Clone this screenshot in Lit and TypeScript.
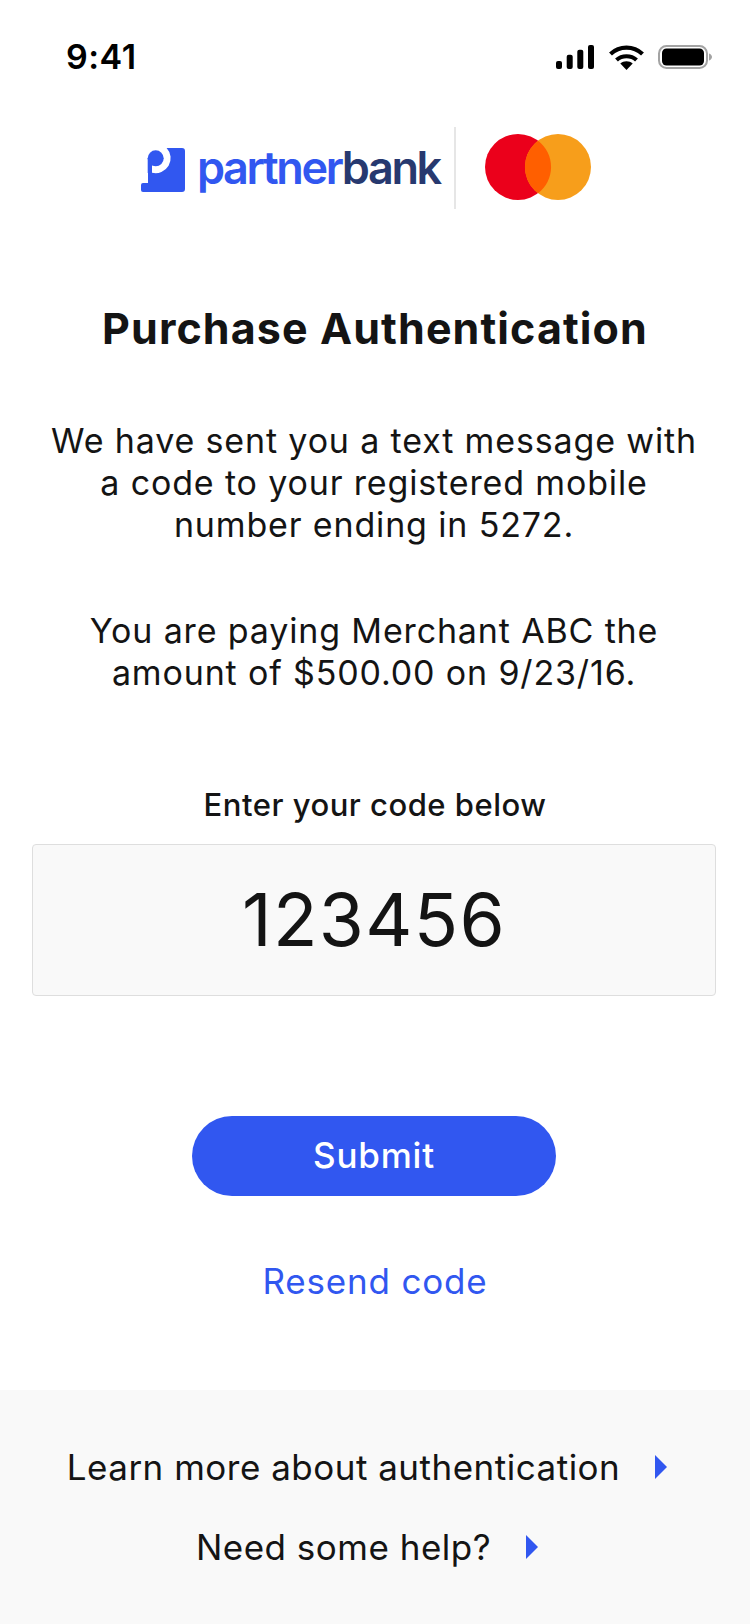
import { LitElement, html, css } from "lit";
import { customElement } from "lit/decorators.js";

@customElement("app-root")
export class AppRoot extends LitElement {
  static styles = css`
    :host { display: block; width: 750px; height: 1624px; background: #fff; font-family: Inter, "Noto Sans", sans-serif; color: #141414; overflow: hidden; }
    .page { display: flex; flex-direction: column; height: 1624px; }
    .status { height: 112px; flex: none; display: flex; justify-content: space-between; align-items: flex-start; padding: 37px 38px 0 66px; box-sizing: border-box; }
    .time { font-size: 34px; line-height: 40px; font-weight: 600; color: #000; letter-spacing: 0.5px; }
    .sys { display: flex; align-items: flex-start; padding-top: 8px; }
    .sys svg { display: block; }
    .wifi { margin-left: 15px; }
    .batt { margin-left: 14px; }
    .brand { height: 100px; flex: none; display: flex; align-items: center; justify-content: flex-start; padding: 12px 0 0 141px; box-sizing: border-box; }
    .mark { display: block; flex: none; margin-top: 4px; }
    .word { margin-left: 12px; font-size: 45px; line-height: 50px; font-weight: 600; letter-spacing: -2.4px; color: #3157f0; white-space: nowrap; }
    .word b { font-weight: 600; color: #27396f; }
    .rule { width: 2px; height: 82px; background: #e6e6e6; margin-left: 14px; flex: none; }
    .mc { display: block; margin: 0 0 2px 29px; flex: none; }
    main { flex: 1; display: flex; flex-direction: column; align-items: center; }
    h1 { margin: 91px 0 0; font-size: 43px; line-height: 50px; font-weight: 700; letter-spacing: 1.1px; text-align: center; }
    .msg { margin: 67px 2px 0 0; font-size: 34px; line-height: 42px; letter-spacing: 0.85px; text-align: center; width: 720px; }
    .msg + .msg { margin-top: 64px; }
    .label { margin: 92px 0 0; font-size: 31px; line-height: 38px; font-weight: 500; letter-spacing: 0.5px; text-align: center; }
    .code { margin: 20px 2px 0 0; width: 684px; height: 152px; box-sizing: border-box; border: 1px solid #dedede; border-radius: 4px; background: #f9f9f9; display: flex; align-items: center; justify-content: center; padding-bottom: 2px; font-size: 73px; font-weight: 400; letter-spacing: 1.3px; }
    .submit { margin: 120px 2px 0 0; width: 364px; height: 80px; border: 0; border-radius: 40px; background: #3157f0; color: #fff; font: 500 35px Inter, sans-serif; letter-spacing: 0.8px; display: flex; align-items: center; justify-content: center; padding: 0 0 3px; box-sizing: border-box; }
    .resend { margin-top: 64px; font-size: 35px; line-height: 42px; font-weight: 400; letter-spacing: 0.8px; color: #3157f0; }
    footer { height: 234px; flex: none; background: #f9f9f9; display: flex; flex-direction: column; align-items: center; padding: 56px 16px 0 0; box-sizing: border-box; gap: 38px; }
    .link { display: flex; align-items: center; gap: 35px; font-size: 35px; line-height: 42px; letter-spacing: 0.5px; }
    .tri { width: 0; height: 0; border-left: 12px solid #3157f0; border-top: 12px solid transparent; border-bottom: 12px solid transparent; }
  `;

  render() {
    return html`
      <div class="page">
        <div class="status">
          <span class="time">9:41</span>
          <div class="sys">
            <svg width="38" height="25" viewBox="0 0 38 25" fill="#000">
              <rect x="0" y="16" width="6" height="8" rx="2"/>
              <rect x="10.700" y="9.700" width="6" height="14.300" rx="2"/>
              <rect x="21.300" y="4.700" width="6" height="19.300" rx="2"/>
              <rect x="32" y="0" width="6" height="24" rx="2"/>
            </svg>
            <svg class="wifi" width="35" height="25" viewBox="0 0 35 25" fill="none" stroke="#000" stroke-width="4.200">
              <path d="M1.500 9C10.500 .5 24.500 .5 33.500 9"/>
              <path d="M7.500 15C13 10 22 10 27.500 15"/>
              <path d="M17.500 25l-6.200-6.600c3.400-3 9-3 12.400 0z" fill="#000" stroke="none"/>
            </svg>
            <svg class="batt" width="54" height="25" viewBox="0 0 54 25">
              <rect x="1" y="1" width="48" height="22" rx="7.500" fill="none" stroke="#a3a3a3" stroke-width="2"/>
              <rect x="4" y="3.500" width="42" height="17" rx="4.500" fill="#000"/>
              <path d="M51 8.500c1.800 .6 3 2 3 3.500s-1.200 2.900-3 3.500z" fill="#a3a3a3"/>
            </svg>
          </div>
        </div>
        <div class="brand">
          <svg class="mark" width="44" height="44" viewBox="0 0 44 44" fill="#3157f0">
            <path d="M25.600 0H41a3 3 0 0 1 3 3V41a3 3 0 0 1-3 3H2a2 2 0 0 1-2-2V37a2 2 0 0 1 2-2H7V24.800H11A15 15 0 0 0 25.600 0Z"/>
            <circle cx="14.700" cy="10.300" r="8"/>
            <rect x="6.700" y="10" width="4.300" height="15"/>
          </svg>
          <span class="word">partner<b>bank</b></span>
          <span class="rule"></span>
          <svg class="mc" width="106" height="66" viewBox="0 0 106 66">
            <circle cx="33" cy="33" r="33" fill="#eb001b"/>
            <circle cx="73" cy="33" r="33" fill="#f79e1b"/>
            <path d="M53 6.700a33 33 0 0 1 0 52.600a33 33 0 0 1 0-52.600z" fill="#ff5f00"/>
          </svg>
        </div>
        <main>
          <h1>Purchase Authentication</h1>
          <p class="msg">We have sent you a text message with<br>a code to your registered mobile<br>number ending in 5272.</p>
          <p class="msg">You are paying Merchant ABC the<br>amount of $500.00 on 9/23/16.</p>
          <div class="label">Enter your code below</div>
          <div class="code">123456</div>
          <button class="submit">Submit</button>
          <div class="resend">Resend code</div>
        </main>
        <footer>
          <div class="link">Learn more about authentication<span class="tri"></span></div>
          <div class="link">Need some help?<span class="tri"></span></div>
        </footer>
      </div>
    `;
  }
}
